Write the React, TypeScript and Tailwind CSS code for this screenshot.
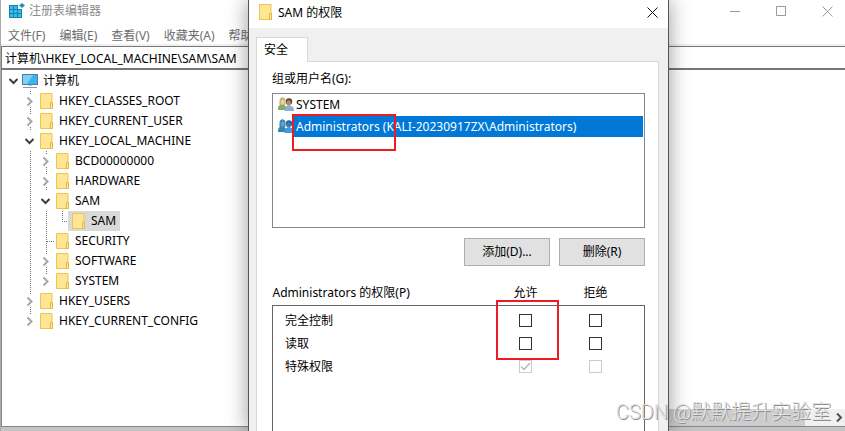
import type { ReactNode } from "react";

type Guide = "blank" | "line" | "open" | "closed" | "last" | "corner" | "tee";

interface TreeNode {
	label: string;
	guides: Guide[];
	selected?: boolean;
	root?: boolean;
}

const nodes: TreeNode[] = [
	{ label: "计算机", guides: ["open"], root: true },
	{ label: "HKEY_CLASSES_ROOT", guides: ["blank", "closed"] },
	{ label: "HKEY_CURRENT_USER", guides: ["blank", "closed"] },
	{ label: "HKEY_LOCAL_MACHINE", guides: ["blank", "open"] },
	{ label: "BCD00000000", guides: ["blank", "line", "closed"] },
	{ label: "HARDWARE", guides: ["blank", "line", "closed"] },
	{ label: "SAM", guides: ["blank", "line", "open"] },
	{ label: "SAM", guides: ["blank", "line", "line", "corner"], selected: true },
	{ label: "SECURITY", guides: ["blank", "line", "tee"] },
	{ label: "SOFTWARE", guides: ["blank", "line", "closed"] },
	{ label: "SYSTEM", guides: ["blank", "line", "last"] },
	{ label: "HKEY_USERS", guides: ["blank", "closed"] },
	{ label: "HKEY_CURRENT_CONFIG", guides: ["blank", "last"] },
];

const menus = ["文件(F)", "编辑(E)", "查看(V)", "收藏夹(A)", "帮助(H)"];

const permissions = [
	{ name: "完全控制", allow: false, disabled: false },
	{ name: "读取", allow: false, disabled: false },
	{ name: "特殊权限", allow: true, disabled: true },
];

function Folder() {
	return (
		<svg width="16" height="16" viewBox="0 0 16 16" className="shrink-0">
			<path d="M2.5.5h11.5v9l.5.5v5.500h-12z" fill="#ffe594" stroke="#eac54f" />
			<path d="M12.500 9.500h2v6h-2z" fill="#ffe9a6" stroke="#e3b93c" />
		</svg>
	);
}

function Computer() {
	return (
		<svg width="16" height="16" viewBox="0 0 16 16" className="shrink-0">
			<rect x=".5" y="1.500" width="15" height="10" fill="#3fb3ee" stroke="#4b7f9f" />
			<path d="M1 2h10L5 11H1z" fill="#7fd0f8" />
			<path d="M6 12h4v1H6z" fill="#c3d0d8" />
			<path d="M1 14h14v1H1z" fill="#7c98aa" />
		</svg>
	);
}

function RegistryIcon() {
	return (
		<svg width="16" height="16" viewBox="0 0 16 16" className="shrink-0">
			<path d="M0 2h9v4h4v9H0z" fill="#1681ac" />
			<path d="M1 3h3v3H1zM5 3h3v3H5zM1 7h3v3H1zM5 7h3v3H5zM9 7h3v3H9zM1 11h3v3H1zM5 11h3v3H5zM9 11h3v3H9z" fill="#35bdec" />
			<path d="M13 0l3 2.500-3 2.500-3-2.500z" fill="#1b8fbd" />
		</svg>
	);
}

function Users({ selected = false }: { selected?: boolean }) {
	return (
		<svg width="16" height="16" viewBox="0 0 16 16" className="shrink-0">
			<path d="M0 13c0-4 1-5.500 4-5.500s4.500 2 4.500 5.500z" fill={selected ? "#2f86b4" : "#86ad5c"} />
			<path d="M1.500 4c0-5 6-5 6 0 0 2 .5 3-.5 4H2c-1-1-.5-2-.5-4z" fill={selected ? "#3a86b4" : "#c5b46c"} />
			<ellipse cx="4.700" cy="5" rx="1.900" ry="2.600" fill={selected ? "#62a5cb" : "#e8cfaa"} />
			<path d="M6.500 14c0-4 1.500-5.500 4.500-5.500s5 1.500 5 5.500z" fill={selected ? "#4797d6" : "#86b0dc"} />
			<circle cx="11" cy="4.500" r="3.200" fill={selected ? "#1f649a" : "#594334"} />
			<ellipse cx="10.700" cy="6" rx="2.200" ry="2.800" fill={selected ? "#387eae" : "#b98a66"} />
		</svg>
	);
}

function GuideCell({ kind }: { kind: Guide }) {
	const dots = { stroke: "#707070", strokeDasharray: "1 1", fill: "none" };
	return (
		<svg width="16" height="20" viewBox="0 0 16 20" className="shrink-0">
			{(kind === "line" || kind === "tee") && <path d="M8.500 0v20" {...dots} />}
			{kind === "tee" && <path d="M9 10.500h7" {...dots} />}
			{kind === "corner" && <path d="M8.500 0v10.500h7" {...dots} />}
			{kind === "closed" && <path d="M8.500 0v4M8.500 16v4" {...dots} />}
			{kind === "last" && <path d="M8.500 0v4" {...dots} />}
			{(kind === "closed" || kind === "last") && (
				<path d="M5.500 6.500l4 4-4 4" fill="none" stroke="#a6a6a6" strokeWidth="2" />
			)}
			{kind === "open" && <path d="M3.500 8l4 4 4-4" fill="none" stroke="#404040" strokeWidth="2" />}
		</svg>
	);
}

function TreeRow({ node }: { node: TreeNode }) {
	return (
		<li className="flex h-5 items-center whitespace-nowrap">
			{node.guides.map((kind, i) => (
				<GuideCell key={i} kind={kind} />
			))}
			<span className={`-ml-0.5 flex h-5 items-center gap-[5px] pr-1 pl-0.5 ${node.selected ? "bg-[#d9d9d9]" : ""}`}>
				{node.root ? <Computer /> : <Folder />}
				{node.label}
			</span>
		</li>
	);
}

function DialogButton({ children }: { children: ReactNode }) {
	return (
		<button type="button" className="h-7 w-[86px] border border-[#adadad] bg-[#e1e1e1]">
			{children}
		</button>
	);
}

function CheckBox({ label, checked = false, disabled = false }: { label: string; checked?: boolean; disabled?: boolean }) {
	return (
		<span className="relative mx-auto block size-[13px]">
			<input
				type="checkbox"
				aria-label={label}
				defaultChecked={checked}
				disabled={disabled}
				className="peer block size-[13px] appearance-none border border-[#333] bg-white disabled:border-[#ccc]"
			/>
			<svg viewBox="0 0 13 13" className="pointer-events-none absolute inset-0 hidden peer-checked:block">
				<path d="M2 6.500l3 3 6-6.500" fill="none" stroke="#b5b5b5" strokeWidth="1.400" />
			</svg>
		</span>
	);
}

function PermissionsDialog() {
	return (
		<section
			role="dialog"
			aria-label="SAM 的权限"
			className="absolute inset-y-0 left-[248px] flex w-[421px] flex-col border-x border-[#555] bg-[#f0f0f0] shadow-[0_0_20px_rgba(0,0,0,0.4)]"
		>
			<header className="flex h-7 shrink-0 items-center bg-white pr-2 pb-1 pl-2">
				<Folder />
				<h2 className="flex-1 pt-0.5 pl-[5px]">SAM 的权限</h2>
				<button type="button" aria-label="关闭">
					<svg width="15" height="11" viewBox="0 0 15 11">
						<path d="M2.500.5l10 10M12.500.5l-10 10" stroke="#111" fill="none" />
					</svg>
				</button>
			</header>

			<div className="flex min-h-0 flex-1 flex-col pt-[9px] pr-[9px] pl-[7px]">
				<div role="tablist" className="flex">
					<button
						type="button"
						role="tab"
						aria-selected="true"
						className="relative z-10 -mb-px h-[25px] w-[52px] border border-b-0 border-[#d9d9d9] bg-white pl-[7px] text-left"
					>
						安全
					</button>
				</div>

				<div role="tabpanel" className="flex min-h-0 flex-1 flex-col overflow-hidden border border-b-0 border-[#d9d9d9] bg-white pt-[7px] pr-[13px] pl-[15px]">
					<h3 id="groups" className="h-6 shrink-0 leading-5">组或用户名(G):</h3>
					<ul role="listbox" aria-labelledby="groups" className="h-[135px] shrink-0 border border-[#828790] px-px">
						<li role="option" aria-selected="false" className="flex h-[22px] items-center pl-1">
							<Users />
							<span className="pl-0.5">SYSTEM</span>
						</li>
						<li role="option" aria-selected="true" className="flex h-[21px] items-center pl-1 text-white">
							<Users selected />
							<span className="flex h-full flex-1 items-center bg-[#0078d7] pl-0.5">Administrators (KALI-20230917ZX\Administrators)</span>
						</li>
					</ul>

					<div className="flex justify-end gap-[9px] pt-2.5">
						<DialogButton>添加(D)...</DialogButton>
						<DialogButton>删除(R)</DialogButton>
					</div>

					<table className="mt-[15px] w-full table-fixed border-collapse text-left">
						<colgroup>
							<col />
							<col className="w-[70px]" />
							<col className="w-[70px]" />
							<col className="w-[14px]" />
						</colgroup>
						<thead>
							<tr className="h-6">
								<th className="font-normal">Administrators 的权限(P)</th>
								<th className="text-center font-normal">允许</th>
								<th className="text-center font-normal">拒绝</th>
								<td />
							</tr>
						</thead>
						<tbody className="border border-[#646464]">
							<tr className="h-1"><td colSpan={4} /></tr>
							{permissions.map((p) => (
								<tr key={p.name} className="h-[23px]">
									<th className="pl-3 font-normal">{p.name}</th>
									<td><CheckBox label={`${p.name} 允许`} checked={p.allow} disabled={p.disabled} /></td>
									<td><CheckBox label={`${p.name} 拒绝`} disabled={p.disabled} /></td>
									<td />
								</tr>
							))}
							<tr className="h-24"><td colSpan={4} /></tr>
						</tbody>
					</table>
				</div>
			</div>
		</section>
	);
}

export default function App() {
	return (
		<div className="relative h-screen overflow-hidden bg-white font-['Noto_Sans','Noto_Sans_CJK_SC',sans-serif] text-xs text-black">
			<main className="flex h-full flex-col border-l border-[#aaa]">
				<header className="flex h-[22px] shrink-0 items-center justify-between pr-3 pl-2 text-[#8c8c8c]">
					<div className="flex items-center gap-1">
						<RegistryIcon />
						<h1>注册表编辑器</h1>
					</div>
					<div className="flex gap-9">
						<button type="button" aria-label="最小化">
							<svg width="10" height="11" viewBox="0 0 10 11"><path d="M0 5.500h10" stroke="#999" /></svg>
						</button>
						<button type="button" aria-label="最大化">
							<svg width="10" height="11" viewBox="0 0 10 11"><path d="M.5.500h9v9h-9z" fill="none" stroke="#999" /></svg>
						</button>
						<button type="button" aria-label="关闭窗口">
							<svg width="11" height="11" viewBox="0 0 11 11"><path d="M.5.500l10 10M10.500.5l-10 10" stroke="#999" /></svg>
						</button>
					</div>
				</header>
				<nav className="flex h-6 shrink-0 items-center gap-3.5 border-b-2 border-[#f0f0f0] pt-1.5 pl-[7px] text-[#6d6d6d]">
					{menus.map((m) => (
						<button key={m} type="button" className="whitespace-nowrap">{m}</button>
					))}
				</nav>
				<input
					aria-label="地址"
					defaultValue="计算机\HKEY_LOCAL_MACHINE\SAM\SAM"
					className="h-6 w-full shrink-0 border border-r-0 border-b-2 border-[#777] bg-white px-[3px]"
				/>
				<div className="flex min-h-0 flex-1 border-b-4 border-[#c4c4c6]">
					<ul className="w-[250px] shrink-0 border-b border-l border-[#828790] pt-px pl-1">
						{nodes.map((node, i) => (
							<TreeRow key={i} node={node} />
						))}
					</ul>
					<div className="flex flex-1 flex-col justify-end border-b border-[#828790]">
						<div className="flex h-[17px] items-center bg-[#f0f0f0]">
							<div className="mr-[29px] h-full flex-1 bg-[#cdcdcd]" />
							<svg width="11" height="9" viewBox="0 0 11 9" className="shrink-0">
								<path d="M3 .5l4 4-4 4" fill="none" stroke="#505050" strokeWidth="2" />
							</svg>
						</div>
					</div>
				</div>
			</main>

			<PermissionsDialog />

			{/* Highlight frames drawn over the dialog */}
			<div className="pointer-events-none absolute top-[114px] left-[292px] h-[37px] w-[104px] border-2 border-[#ed1c24]" />
			<div className="pointer-events-none absolute top-[300px] left-[496px] h-[60px] w-[63px] border-2 border-[#ed1c24]" />
			<p className="pointer-events-none absolute right-3.5 bottom-[5px] font-['Roboto','Noto_Sans_CJK_SC',sans-serif] text-xl leading-7 font-light whitespace-nowrap text-[#e2e2e2] [text-shadow:1px_1px_0_#8c8c8c]">
				CSDN @默默提升实验室
			</p>
		</div>
	);
}
